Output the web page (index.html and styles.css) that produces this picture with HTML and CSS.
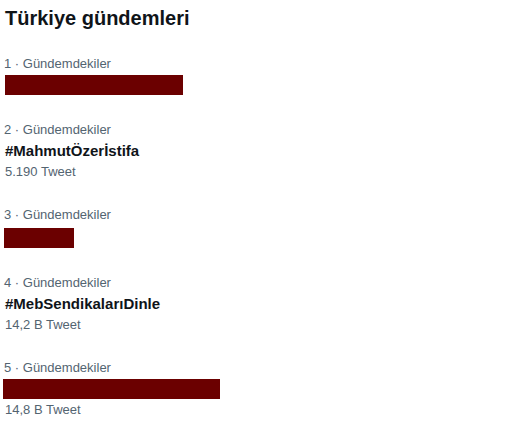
FILE: index.html
```html
<!DOCTYPE html>
<html lang="tr">
<head>
<meta charset="utf-8">
<title>Türkiye gündemleri</title>
<link rel="stylesheet" href="styles.css">
</head>
<body>
<section class="trends">
  <h2 class="title">Türkiye gündemleri</h2>
  <div class="trend">
    <div class="meta">1 · Gündemdekiler</div>
    <div class="redact redact-1"></div>
  </div>
  <div class="trend">
    <div class="meta">2 · Gündemdekiler</div>
    <div class="tag">#MahmutÖzerİstifa</div>
    <div class="count">5.190 Tweet</div>
  </div>
  <div class="trend">
    <div class="meta">3 · Gündemdekiler</div>
    <div class="redact redact-3"></div>
  </div>
  <div class="trend">
    <div class="meta">4 · Gündemdekiler</div>
    <div class="tag">#MebSendikalarıDinle</div>
    <div class="count">14,2 B Tweet</div>
  </div>
  <div class="trend">
    <div class="meta">5 · Gündemdekiler</div>
    <div class="redact redact-5"></div>
    <div class="count">14,8 B Tweet</div>
  </div>
</section>
</body>
</html>
```
FILE: styles.css
```css
html, body {
  margin: 0;
  padding: 0;
  background: #ffffff;
}

body {
  font-family: "Liberation Sans", Arial, sans-serif;
  color: #0f1419;
}

.trends {
  display: flex;
  flex-direction: column;
  padding: 6px 0 0 5px;
}

.title {
  margin: 0;
  font-size: 20px;
  line-height: 24px;
  font-weight: 700;
  color: #0f1419;
  padding-bottom: 12px;
}

.trend {
  display: flex;
  flex-direction: column;
  align-items: flex-start;
  padding: 14px 0 13px 0;
}

.meta {
  font-size: 13px;
  line-height: 16px;
  color: #536471;
  margin-left: -1px;
}

.tag {
  margin-top: 3px;
  font-size: 15px;
  line-height: 20px;
  font-weight: 700;
  color: #0f1419;
}

.count {
  margin-top: 3px;
  font-size: 13px;
  line-height: 16px;
  color: #536471;
}

.redact {
  margin-top: 3px;
  height: 20px;
  background: #6b0000;
}

.redact-1 {
  width: 178px;
}

.redact-3 {
  margin-top: 5px;
  margin-left: -1px;
  width: 70px;
}

.redact-5 {
  margin-left: -2px;
  width: 217px;
}
```
